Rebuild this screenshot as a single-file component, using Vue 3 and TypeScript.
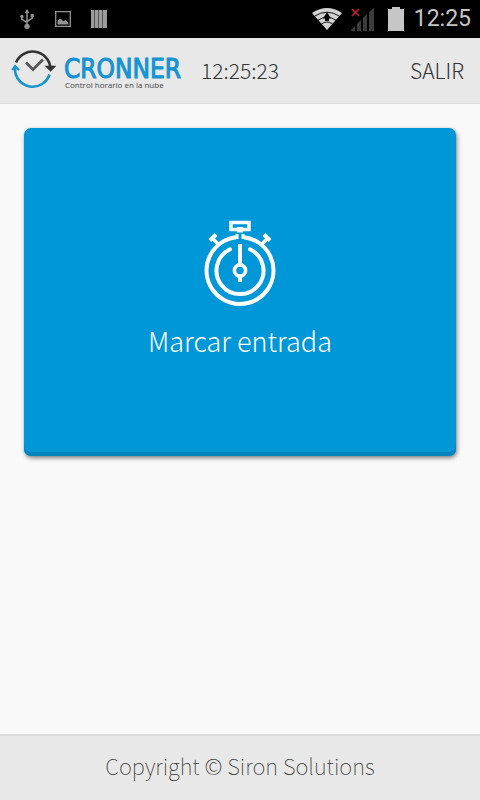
<script setup lang="ts">
import { ref } from 'vue'

const statusTime = ref<string>('12:25')
const currentTime = ref<string>('12:25:23')
const clockedIn = ref<boolean>(false)

function toggleEntry(): void {
  clockedIn.value = !clockedIn.value
}
</script>

<template>
  <div class="screen">
    <div class="status-bar">
      <div class="status-group notices">
        <svg width="16" height="20" viewBox="0 0 14 20" fill="none" stroke="#929292" stroke-width="1.5" aria-hidden="true">
          <path d="M7 3v14M1.8 8v2.2l5.2 3.4M12.2 7v2.2L7 12.5" />
          <path d="M7 0l2.4 4H4.6z" fill="#929292" stroke="none" />
          <circle cx="7" cy="17.3" r="2.6" fill="#929292" stroke="none" />
          <circle cx="1.9" cy="7.4" r="1.7" fill="#929292" stroke="none" />
          <path d="M10.6 5h3.2v3.2h-3.2z" fill="#929292" stroke="none" />
        </svg>
        <svg width="16" height="16" viewBox="0 0 16 16" aria-hidden="true">
          <path d="M.7.7h14.6v14.6H.7z" fill="none" stroke="#929292" stroke-width="1.3" />
          <path d="M2.5 13.5v-3.4l2-2.3 1.8.5 2 2 2-1.2 3 2.4v2z" fill="#929292" />
        </svg>
        <svg width="16" height="18" viewBox="0 0 16 18" aria-hidden="true">
          <path d="M0 0h16v18H0z" fill="#555" />
          <path d="M0 0h3v18H0zM4 0h3v18H4zM8 0h3v18H8zM12 0h4v18h-4z" fill="#9b9b9b" />
        </svg>
      </div>
      <div class="status-group">
        <svg class="wifi" width="30" height="22" viewBox="0 0 30 22" aria-hidden="true">
          <path d="M0 5Q15-5 30 5L15 22z" fill="#d2d2d2" />
          <path d="M2.5 8.2q12.5-8 25 0M6 12.2q9-6 18 0M9.5 16q5.5-4 11 0" fill="none" stroke="#000" stroke-width="0.9" />
          <path d="M15 4l4 6.5h-2v2.5h-4v-2.5h-2z" fill="#000" />
        </svg>
        <svg class="signal" width="24" height="23" viewBox="0 0 24 23" aria-hidden="true">
          <path d="M0 23v-1l4-4v5zM6 23v-7l4-4v11zM12 23V10l4-4v17zM18 23V4l5-4v23z" fill="#3c3c3c" />
          <path d="M1 1l7 7M8 1l-7 7" stroke="#b5202c" stroke-width="1.7" />
        </svg>
        <svg class="battery" width="16" height="24" viewBox="0 0 16 24" aria-hidden="true">
          <path d="M4 0h8v2h4v22H0V2h4z" fill="#c6c6c6" />
        </svg>
        <span class="status-time">{{ statusTime }}</span>
      </div>
    </div>

    <header class="top-bar">
      <a class="brand" href="#" aria-label="CRONNER">
        <svg width="45" height="40" viewBox="0 0 45 40" fill="none" aria-hidden="true">
          <path d="M5 13.5A18 18 0 0 1 39.5 19" stroke="#333" stroke-width="2.6" />
          <path d="M35.5 17.5l4 4 4-4z" fill="#333" stroke="#333" stroke-width="1.6" />
          <path d="M38.5 25.5A17.7 17.7 0 0 1 4 19" stroke="#1793d1" stroke-width="2.6" />
          <path d="M1.2 21L4.2 17.2l3.8 3.8" stroke="#1793d1" stroke-width="2.4" />
          <path d="M15 13.5l7 7L32 10.5" stroke="#555" stroke-width="2.8" />
        </svg>
        <span class="brand-words">
          <span class="brand-name">CRONNER</span>
          <span class="brand-tag">Control horario en la nube</span>
        </span>
      </a>
      <time class="clock">{{ currentTime }}</time>
      <a class="logout" href="#">SALIR</a>
    </header>

    <main class="content">
      <button class="entry" type="button" :aria-pressed="clockedIn" @click="toggleEntry">
        <svg width="72" height="88" viewBox="0 0 72 88" fill="none" stroke="#fff" stroke-width="4" aria-hidden="true">
          <path d="M32 18.2A33.5 33.5 0 1 0 40 18.2" />
          <path d="M33 20v-5M39 20v-5" stroke-width="3" />
          <path d="M33 10.5H27V3.5h18v7h-6" stroke-width="3.5" />
          <path d="M34.5 8v5.5M37.5 8v5.5" stroke-width="3" />
          <path d="M26 30.3A23.5 23.5 0 1 0 46 30.3" stroke-linecap="round" />
          <path d="M36 25v21M36 57v6" />
          <circle cx="36" cy="51.5" r="5.6" stroke-width="3.6" />
          <path d="M14 25l-5-5M58 25l5-5" stroke-width="3.6" />
          <path d="M6 21.5l6-6M66 21.5l-6-6" stroke-width="4" />
        </svg>
        <span class="entry-label">Marcar entrada</span>
      </button>
    </main>

    <footer class="bottom-bar">Copyright © Siron Solutions</footer>
  </div>
</template>

<style>
body {
  margin: 0;
  background: #f9f9f9;
}
</style>

<style scoped>
.screen {
  display: flex;
  flex-direction: column;
  min-height: 100vh;
  font-family: "Noto Sans CJK SC", "Open Sans", sans-serif;
  font-weight: 300;
  color: #333;
  background: #f9f9f9;
}

.status-bar {
  display: flex;
  justify-content: space-between;
  align-items: center;
  height: 38px;
  padding: 0 9px 0 19px;
  background: #000;
}

.status-group {
  display: flex;
  align-items: center;
}

.notices {
  gap: 20px;
}

.wifi {
  margin-right: 9px;
}

.signal {
  margin-right: 13px;
}

.battery {
  margin-right: 10px;
}

.status-time {
  font-family: Roboto, sans-serif;
  font-weight: 400;
  font-size: 23px;
  line-height: 38px;
  color: #c6c6c6;
}

.top-bar {
  display: flex;
  align-items: center;
  box-sizing: border-box;
  height: 66px;
  padding: 0 16px 4px 11px;
  background: #e8e8e8;
  border-bottom: 1px solid #dadada;
}

.brand {
  display: flex;
  align-items: center;
  gap: 8px;
  color: inherit;
  text-decoration: none;
}

.brand-words {
  display: flex;
  flex-direction: column;
  padding-top: 12px;
}

.brand-name {
  font-family: "DejaVu Sans Condensed", "Noto Sans CJK SC", sans-serif;
  font-size: 26px;
  line-height: 20px;
  font-weight: 400;
  -webkit-text-stroke: 1px #1793d1;
  color: #1793d1;
}

.brand-tag {
  padding-left: 1px;
  font-family: "Open Sans", sans-serif;
  font-weight: 400;
  font-size: 8px;
  line-height: 11px;
  color: #444;
}

.clock,
.logout {
  padding-top: 2px;
  font-size: 21px;
  line-height: 32px;
}

.clock {
  margin-left: 20px;
}

.logout {
  margin-left: auto;
  color: inherit;
  text-decoration: none;
}

.content {
  flex: 1;
  padding: 24px;
}

.entry {
  display: flex;
  flex-direction: column;
  align-items: center;
  justify-content: center;
  gap: 14px;
  width: 100%;
  min-height: 328px;
  padding: 20px 24px 24px;
  border: 0;
  border-radius: 7px;
  background: #0097d8;
  box-shadow: inset 0 -4px 0 #0084bd, 1px 2px 4px rgba(0, 0, 0, 0.5);
  font: inherit;
  color: #fff;
  cursor: pointer;
}

.entry-label {
  font-size: 27px;
  line-height: 40px;
}

.bottom-bar {
  box-sizing: border-box;
  height: 66px;
  border-top: 2px solid #dcdcdc;
  background: #e8e8e8;
  font-size: 22px;
  font-weight: 100;
  line-height: 58px;
  text-align: center;
}
</style>
